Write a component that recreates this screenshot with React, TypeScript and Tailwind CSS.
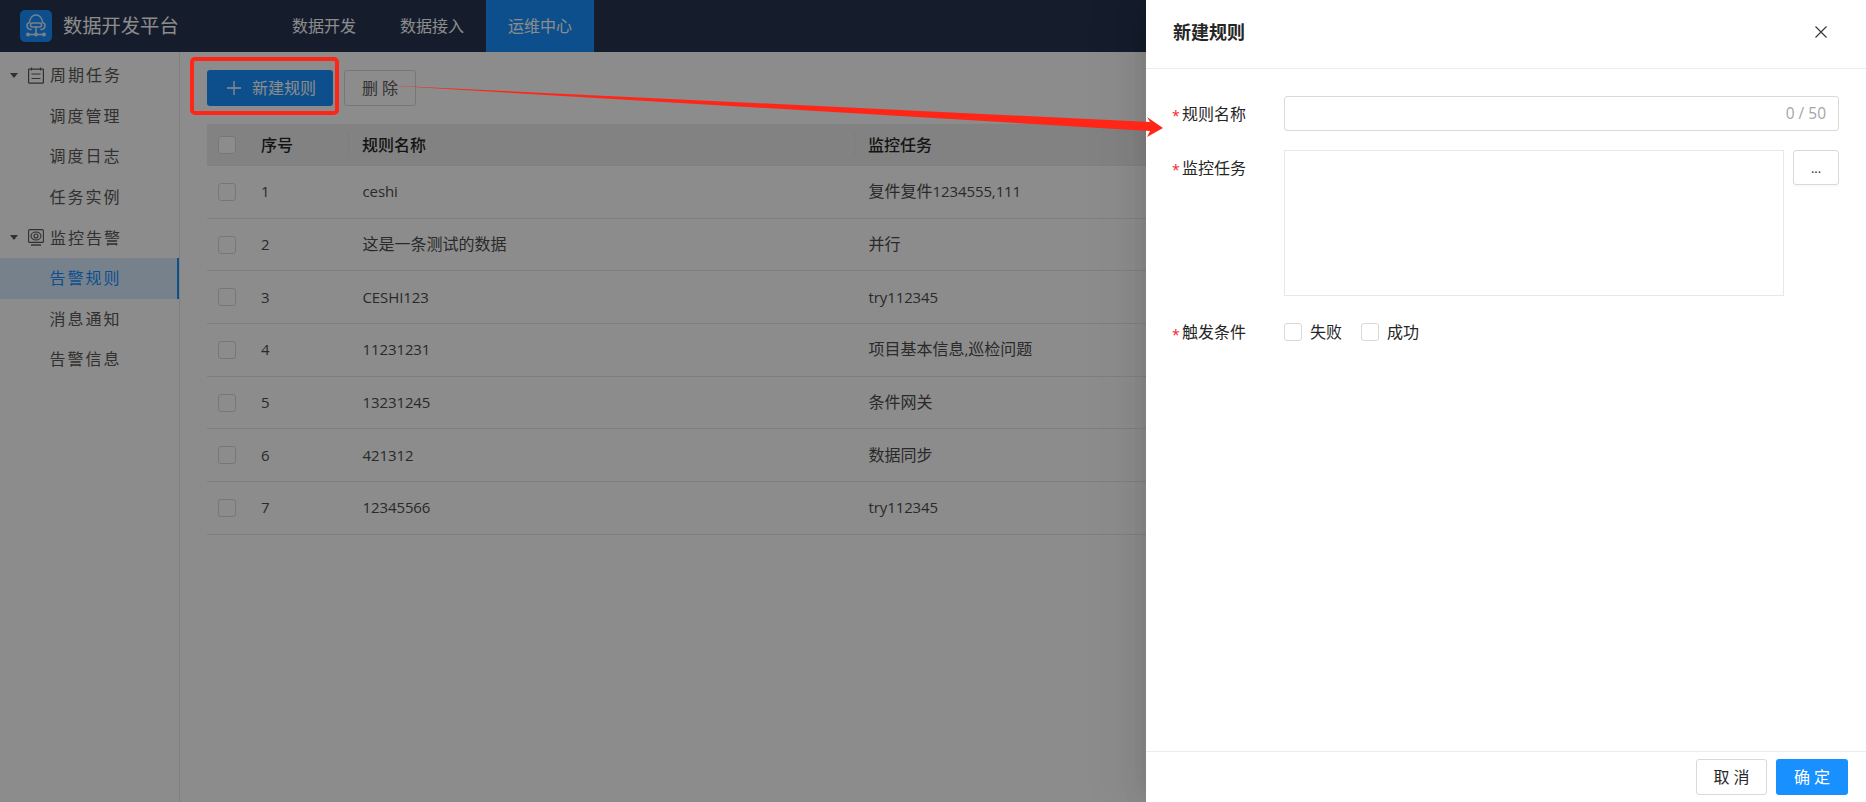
const font = "font-['Open_Sans','Noto_Sans_CJK_SC',sans-serif]";

function Box() {
  return <span className="block h-[18px] w-[18px] shrink-0 rounded-[3px] border border-[#d9d9d9] bg-white" />;
}

function Logo() {
  return (
    <span className="flex h-8 w-8 items-center justify-center rounded-[5px] bg-[#1890ff]">
      <svg width="32" height="32" viewBox="0 0 32 32" fill="none" stroke="#dcebf8" strokeWidth="1.5" strokeLinecap="round">
        <path d="M11 19.5 C6.5 19.5 5.5 13.5 9.5 12.5 C10 7.5 13 5 16 5 C19 5 22 7.5 22.5 12.5 C26.5 13.5 25.5 19.5 21 19.5" />
        <rect x="10.5" y="13" width="11" height="4" rx="2" />
        <path d="M16 17 V24.5 M8 24.5 H24" />
        <circle cx="8" cy="24.5" r="1.2" fill="#dcebf8" />
        <circle cx="16" cy="24.5" r="1.2" fill="#dcebf8" />
        <circle cx="24" cy="24.5" r="1.2" fill="#dcebf8" />
      </svg>
    </span>
  );
}

function Caret() {
  return <span className="ml-[10px] mr-[10px] h-0 w-0 border-x-[4px] border-t-[5px] border-x-transparent border-t-[#595959]" />;
}

function CalendarIcon() {
  return (
    <svg width="16" height="17" viewBox="0 0 16 17" fill="none" stroke="#595959" strokeWidth="1.2">
      <rect x="0.6" y="2.1" width="14.8" height="14" rx="0.6" />
      <path d="M3.5 0.5 V3.5 M12.5 0.5 V3.5 M3.5 7 H12.5 M3.5 11.5 H12.5" />
    </svg>
  );
}

function MonitorIcon() {
  return (
    <svg width="16" height="17" viewBox="0 0 16 17" fill="none" stroke="#595959" strokeWidth="1.1">
      <rect x="0.6" y="0.6" width="14.8" height="12.8" rx="1" />
      <ellipse cx="8" cy="7" rx="5" ry="4" />
      <circle cx="8" cy="7" r="2" />
      <path d="M3 16 H13" strokeWidth="1.4" />
    </svg>
  );
}

function Group({ icon, label }: { icon: React.ReactNode; label: string }) {
  return (
    <div className="flex h-[40.6px] items-center">
      <Caret />
      <span className="mr-[6px] flex w-[16px]">{icon}</span>
      <span className="tracking-[2px]">{label}</span>
    </div>
  );
}

function Item({ label, active }: { label: string; active?: boolean }) {
  return active ? (
    <div className="flex h-[40.6px] items-center border-r-2 border-[#1890ff] bg-[#d9ecff] pl-[49.5px] tracking-[2px] text-[#1890ff]">{label}</div>
  ) : (
    <div className="flex h-[40.6px] items-center pl-[49.5px] tracking-[2px]">{label}</div>
  );
}

const rows = [
  ["1", "ceshi", "复件复件1234555,111"],
  ["2", "这是一条测试的数据", "并行"],
  ["3", "CESHI123", "try112345"],
  ["4", "11231231", "项目基本信息,巡检问题"],
  ["5", "13231245", "条件网关"],
  ["6", "421312", "数据同步"],
  ["7", "12345566", "try112345"],
];

function Mixed({ text }: { text: string }) {
  return (
    <>
      {text.split(/([\x00-\x7f]+)/).map((part, i) =>
        i % 2 === 1 ? (
          <span key={i} className="text-[15px] tracking-[-0.1px]">{part}</span>
        ) : (
          <span key={i}>{part}</span>
        ),
      )}
    </>
  );
}

function HeadCell({ className, children }: { className: string; children: React.ReactNode }) {
  return (
    <div className={className}>
      <span className="flex h-[25px] items-center border-l border-[#e4e4e4] pl-[13px]">{children}</span>
    </div>
  );
}

function Label({ children }: { children: React.ReactNode }) {
  return (
    <label className="flex w-[112px] shrink-0 items-center text-[#262626]">
      <span className="mr-[2px] w-[8px] pt-[4px] text-[14px] text-[#f5222d]">*</span>
      {children}
    </label>
  );
}

export default function App() {
  return (
    <div className={`relative flex h-[802px] w-full flex-col overflow-hidden bg-white text-[16px] text-[#595959] ${font}`}>
      <header className="flex h-[52px] shrink-0 items-center bg-[#27344f] pl-[20px] text-white">
        <Logo />
        <span className="ml-[11px] w-[207px] text-[19.3px]">数据开发平台</span>
        <nav className="flex h-full">
          <a className="flex w-[108px] items-center justify-center">数据开发</a>
          <a className="flex w-[108px] items-center justify-center">数据接入</a>
          <a className="flex w-[108px] items-center justify-center bg-[#1890ff]">运维中心</a>
        </nav>
      </header>

      <div className="flex min-h-0 flex-1">
        <aside className="w-[180px] shrink-0 border-r border-[#e8e8e8] pt-[3px]">
          <Group icon={<CalendarIcon />} label="周期任务" />
          <Item label="调度管理" />
          <Item label="调度日志" />
          <Item label="任务实例" />
          <Group icon={<MonitorIcon />} label="监控告警" />
          <Item label="告警规则" active />
          <Item label="消息通知" />
          <Item label="告警信息" />
        </aside>

        <main className="min-w-0 flex-1 pl-[27px] pr-[20px] pt-[18px]">
          <div className="flex gap-[11px]">
            <button className="flex h-[36px] w-[126px] items-center justify-center gap-[11px] rounded-[3px] bg-[#1890ff] pl-[3px] text-white">
              <svg width="14" height="14" viewBox="0 0 14 14" stroke="currentColor" strokeWidth="1.3">
                <path d="M7 0 V14 M0 7 H14" />
              </svg>
              新建规则
            </button>
            <button className="h-[36px] w-[72px] rounded-[3px] border border-[#d9d9d9] bg-white text-[#595959]">删 除</button>
          </div>

          <div className="mt-[18px]">
            <div className="flex h-[42px] items-center border-b border-[#e8e8e8] bg-[#ededed] font-medium text-[#262626]">
              <div className="w-[40px] shrink-0 pl-[11px]"><Box /></div>
              <div className="w-[101px] shrink-0 pl-[14px]">序号</div>
              <HeadCell className="w-[506px] shrink-0">规则名称</HeadCell>
              <HeadCell className="flex-1">监控任务</HeadCell>
            </div>
            {rows.map((r) => (
              <div key={r[0]} className="flex h-[52.7px] items-center border-b border-[#e8e8e8] text-[#4d4d4d]">
                <div className="w-[40px] shrink-0 pl-[11px]"><Box /></div>
                <div className="w-[101px] shrink-0 pb-[1px] pl-[14px]"><Mixed text={r[0]} /></div>
                <div className="w-[506px] shrink-0 pb-[1px] pl-[14.5px]"><Mixed text={r[1]} /></div>
                <div className="flex-1 pb-[1px] pl-[14.5px]"><Mixed text={r[2]} /></div>
              </div>
            ))}
          </div>
        </main>
      </div>

      {/* modal mask */}
      <div className="absolute inset-0 bg-black/45" />

      {/* drawer */}
      <aside className="absolute bottom-0 right-0 top-0 flex w-[720px] flex-col bg-white shadow-[-6px_0_16px_-8px_rgba(0,0,0,0.08),-9px_0_28px_0_rgba(0,0,0,0.05),-12px_0_48px_16px_rgba(0,0,0,0.03)]">
        <div className="flex h-[69px] shrink-0 items-center justify-between border-b border-[#ececec] pb-[3px] pl-[27px] pr-[39px]">
          <span className="text-[18px] font-bold text-[#262626]">新建规则</span>
          <svg className="mb-[2px]" width="12" height="12" viewBox="0 0 12 12" stroke="#333" strokeWidth="1.1">
            <path d="M0.5 0.5 L11.5 11.5 M11.5 0.5 L0.5 11.5" />
          </svg>
        </div>

        <div className="flex-1 pl-[26px] pr-[27px] pt-[27px]">
          <div className="flex h-[35px] items-center">
            <Label>规则名称</Label>
            <div className="flex h-[35px] flex-1 items-center justify-end rounded-[3px] border border-[#d9d9d9] pr-[12px] text-[15.5px] text-[#a6a6a6]">0 / 50</div>
          </div>
          <div className="mt-[19px] flex">
            <div className="flex h-[35px] items-center"><Label>监控任务</Label></div>
            <div className="h-[146px] w-[500px] shrink-0 border border-[#e8e8e8]" />
            <button className="ml-[9px] flex h-[35px] flex-1 items-center justify-center rounded-[3px] border border-[#d9d9d9] pt-[3px] text-[13px] text-[#262626] shadow-[0_2px_0_rgba(0,0,0,0.02)]">...</button>
          </div>
          <div className="mt-[27px] flex h-[18px] items-center">
            <Label>触发条件</Label>
            <Box />
            <span className="ml-[8px] mr-[19px] text-[#262626]">失败</span>
            <Box />
            <span className="ml-[8px] text-[#262626]">成功</span>
          </div>
        </div>

        <div className="flex h-[51px] shrink-0 items-center justify-end gap-[9px] border-t border-[#ececec] pb-[1px] pr-[18px]">
          <button className="h-[36px] w-[71px] rounded-[3px] border border-[#d9d9d9] bg-white text-[#262626]">取 消</button>
          <button className="h-[36px] w-[72px] rounded-[3px] bg-[#1890ff] text-white">确 定</button>
        </div>
      </aside>

      {/* red annotation */}
      <div className="absolute left-[190px] top-[57px] h-[58px] w-[149px] rounded-[5px] border-[4px] border-[#ff2617]" />
      <svg className="pointer-events-none absolute left-0 top-0" width="1866" height="802">
        <polygon points="380,85 1150,122 1147,117 1163,128 1147,137 1150,131" fill="#ff2617" />
      </svg>
    </div>
  );
}
